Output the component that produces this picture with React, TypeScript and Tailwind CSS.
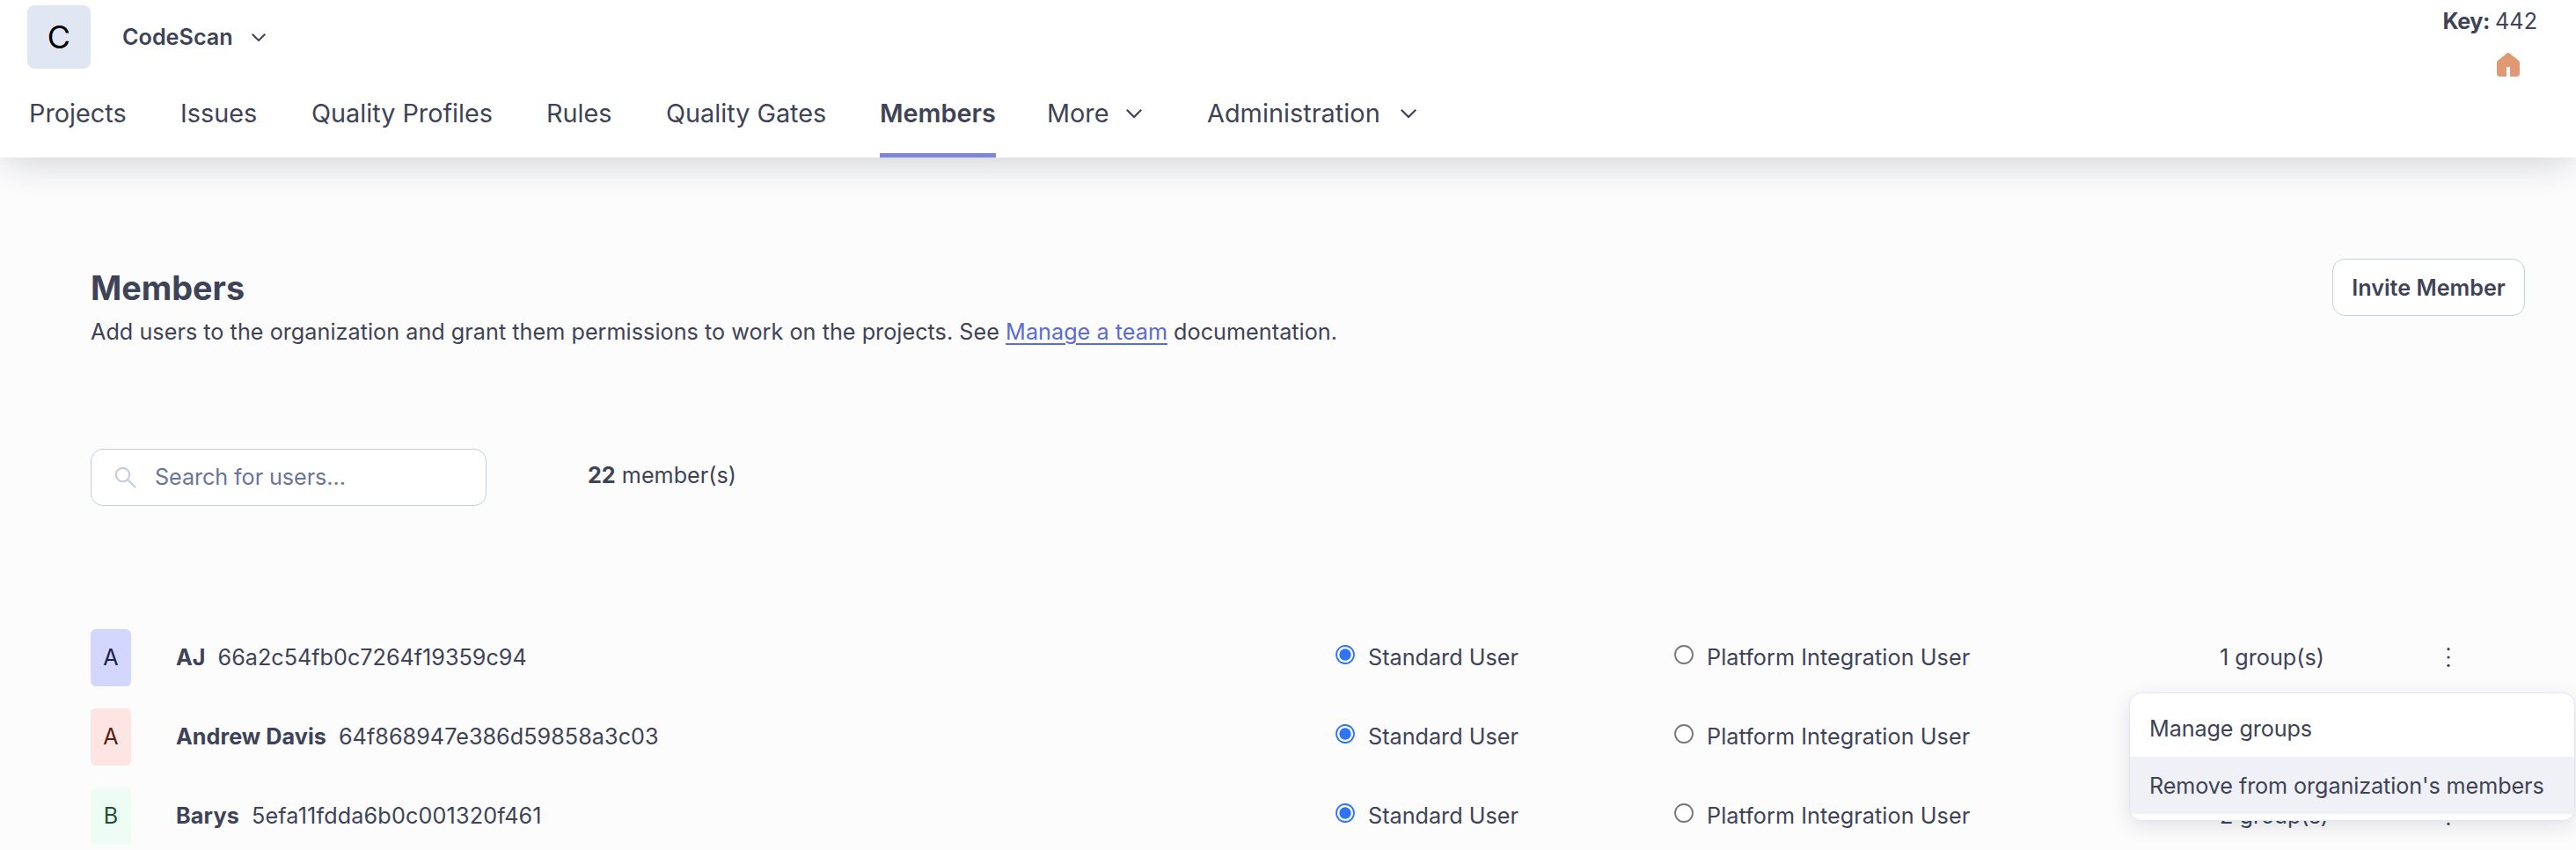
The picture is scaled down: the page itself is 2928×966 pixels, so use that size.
import React from "react";

const ChevronDown = ({ className = "" }: { className?: string }) => (
  <svg className={className} viewBox="0 0 18 10" fill="none" stroke="currentColor" strokeWidth="2.200">
    <path d="M.8.8L9 9 17.200.8" />
  </svg>
);

const Home = () => (
  <svg className="h-[27px] w-[26px]" viewBox="0 0 26 27" fill="#e19973">
    <path d="M11 .9a3 3 0 0 1 4 0l9.600 7.500A3.600 3.600 0 0 1 26 11.200V23.500A3.500 3.500 0 0 1 22.500 27H15V16h-4v11H3.500A3.500 3.500 0 0 1 0 23.500V11.200A3.600 3.600 0 0 1 1.400 8.400z" />
  </svg>
);

const tabs = [
  { label: "Projects", box: "ml-[33px] w-[111px]" },
  { label: "Issues", box: "ml-[61px] w-[87px]" },
  { label: "Quality Profiles", box: "ml-[62px] w-[205px]" },
  { label: "Rules", box: "ml-[62px] w-[74px]" },
  { label: "Quality Gates", box: "ml-[62px] w-[183px]" },
  { label: "Members", box: "ml-[60px] w-[132px]", active: true },
];

const members = [
  { letter: "A", name: "AJ", id: "66a2c54fb0c7264f19359c94", groups: 1, color: "bg-[#d3d7ff] text-[#1d2150]", spacing: "" },
  { letter: "A", name: "Andrew Davis", id: "64f868947e386d59858a3c03", groups: null, color: "bg-[#fce5e2] text-[#5c1d13]", spacing: "tracking-[0.04px]" },
  { letter: "B", name: "Barys", id: "5efa11fdda6b0c001320f461", groups: 2, color: "bg-[#edfdf4] text-[#1d4f33]", spacing: "tracking-[0.15px]" },
];

const Radio = ({ checked = false }: { checked?: boolean }) => (
  <svg className="-mt-[6px] h-[22px] w-[22px] shrink-0" viewBox="0 0 22 22">
    <circle cx="11" cy="11" r="10" fill="#fff" stroke={checked ? "#2f74f7" : "#767676"} strokeWidth="1.800" />
    {checked && <circle cx="11" cy="11" r="6.700" fill="#2f74f7" />}
  </svg>
);

export default function App() {
  return (
    <div className="relative h-[966px] w-[2928px] overflow-hidden bg-[#fcfcfd] font-['Inter',sans-serif] text-[25.2px] leading-[40px] text-[#3e4357]">
      <header className="relative flex h-[179px] flex-col bg-white shadow-[0_10px_40px_-6px_rgba(29,33,47,0.21)]">
        <div className="flex h-[84px] justify-between pl-[31px] pr-[44px]">
          <div className="mt-[6px] flex h-[72px] items-center">
            <div className="flex h-[72px] w-[72px] items-center justify-center rounded-lg bg-[#e1e6f3] text-[36px] text-black">C</div>
            <span className="ml-9 w-[125px] whitespace-nowrap font-semibold">CodeScan</span>
            <ChevronDown className="ml-[22px] h-[9px] w-4" />
          </div>
          <div className="mt-1 flex flex-col items-end">
            <div className="whitespace-nowrap"><b className="font-bold tracking-[-0.4px]">Key:</b><span className="ml-[6px]">442</span></div>
            <div className="mr-5 mt-4"><Home /></div>
          </div>
        </div>
        <nav className="flex h-[95px] text-[28.8px]">
          {tabs.map((t) => (
            <div key={t.label} className={`${t.box} flex flex-col justify-between whitespace-nowrap pt-[25px]`}>
              <span className={t.active ? "font-semibold" : ""}>{t.label}</span>
              {t.active && <span className="h-[5px] bg-[#7b87d9]" />}
            </div>
          ))}
          <div className="ml-[58px] flex h-[90px] items-center whitespace-nowrap"><span className="w-[70px]">More</span><ChevronDown className="ml-[20px] h-[10px] w-[18px]" /></div>
          <div className="ml-[74px] flex h-[90px] items-center whitespace-nowrap"><span className="w-[197px] tracking-[0.05px]">Administration</span><ChevronDown className="ml-[23px] h-[10px] w-[18px]" /></div>
        </nav>
      </header>

      <main className="pl-[103px]">
        <div className="flex justify-between pr-[58px] pt-[115px]">
          <div className="pt-[9px]">
            <h1 className="text-[37.8px] font-bold leading-[48px]">Members</h1>
            <p className="mt-[6px] whitespace-nowrap tracking-[0.03px]">
              Add users to the organization and grant them permissions to work on the projects. See{" "}
              <a className="text-[#5d6cd0] underline decoration-2 underline-offset-4">Manage a team</a> documentation.
            </p>
          </div>
          <button className="h-[65px] w-[219px] whitespace-nowrap rounded-[14px] border border-[#c5cddf] bg-white font-semibold">Invite Member</button>
        </div>

        <div className="mt-[113px] flex items-center">
          <div className="flex h-[65px] w-[450px] items-center rounded-[14px] border border-[#c5cddf] bg-white pl-[26px]">
            <svg className="h-[25px] w-[26px]" viewBox="0 0 26 25" fill="none" stroke="#c5cddf" strokeWidth="2.200">
              <circle cx="9.500" cy="9.500" r="7.700" />
              <path d="M15 15l9 9" />
            </svg>
            <span className="-mt-px ml-5 tracking-[-0.08px] text-[#69769b]">Search for users...</span>
          </div>
          <div className="ml-[115px] -mt-[5px] whitespace-nowrap"><b className="font-bold">22</b> member(s)</div>
        </div>

        <div className="mt-[140px] flex flex-col gap-[25px]">
          {members.map((m) => (
            <div key={m.id} className="flex h-[65px] items-center whitespace-nowrap">
              <div className={`${m.color} flex h-[65px] w-[46px] items-center justify-center rounded-md pb-px`}>{m.letter}</div>
              <div className={`${m.spacing} -mt-px ml-[51px] flex w-[1318px] gap-[14px]`}><b className="font-bold">{m.name}</b><span>{m.id}</span></div>
              <div className="-mt-px flex w-[385px] items-center gap-[15px]"><Radio checked /><span>Standard User</span></div>
              <div className="-mt-px flex w-[620px] items-center gap-[15px]"><Radio /><span className="tracking-[0.06px]">Platform Integration User</span></div>
              <div className="-mt-px w-[257px]">{m.groups && `${m.groups} group(s)`}</div>
              <svg className="-mt-px h-[22px] w-[6px]" viewBox="0 0 6 22" fill="currentColor">
                <circle cx="3" cy="1.700" r="1.600" /><circle cx="3" cy="11" r="1.600" /><circle cx="3" cy="20.300" r="1.600" />
              </svg>
            </div>
          ))}
        </div>
      </main>

      <div className="absolute left-[2420px] top-[787px] h-[146px] w-[507px] overflow-hidden whitespace-nowrap rounded-[14px] border border-[#e1e6f3] bg-white pt-[7px] tracking-[-0.1px] shadow-[0_6px_22px_rgba(29,33,47,0.12)]">
        <div className="flex h-[65px] items-center pl-[22px]">Manage groups</div>
        <div className="flex h-[65px] items-center bg-[#eff1f7] pl-[22px]">Remove from organization's members</div>
      </div>
    </div>
  );
}
